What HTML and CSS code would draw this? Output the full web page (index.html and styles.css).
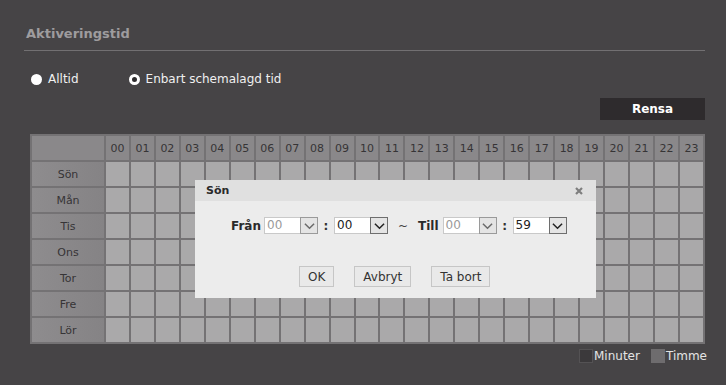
FILE: index.html
```html
<!DOCTYPE html>
<html lang="sv">
<head>
<meta charset="utf-8">
<title>Aktiveringstid</title>
<link rel="stylesheet" href="styles.css">
</head>
<body>
<div class="panel">
  <div class="title">Aktiveringstid</div>
  <div class="radios">
    <label class="radio"><span class="dot dot-full"></span>Alltid</label>
    <label class="radio radio-second"><span class="dot dot-ring"></span>Enbart schemalagd tid</label>
  </div>
  <div class="actions"><button class="clear">Rensa</button></div>
  <div class="grid-wrap">
    <table class="grid">
      <thead>
        <tr><th class="corner"></th><th>00</th><th>01</th><th>02</th><th>03</th><th>04</th><th>05</th><th>06</th><th>07</th><th>08</th><th>09</th><th>10</th><th>11</th><th>12</th><th>13</th><th>14</th><th>15</th><th>16</th><th>17</th><th>18</th><th>19</th><th>20</th><th>21</th><th>22</th><th>23</th></tr>
      </thead>
      <tbody id="rows"></tbody>
    </table>
    <div class="dialog">
      <div class="dlg-head"><span class="dlg-title">Sön</span><span class="dlg-close"><svg viewBox="0 0 8 8" width="8" height="8"><path d="M1 1 L7 7 M7 1 L1 7" fill="none" stroke="currentColor" stroke-width="2.2"/></svg></span></div>
      <div class="dlg-body">
        <div class="time-row">
          <span class="lbl">Från</span>
          <span class="sel sel-dim"><span class="sel-val">00</span><span class="sel-btn"><svg viewBox="0 0 12 8" width="11" height="8"><path d="M1 1.5 L6 6.5 L11 1.5" fill="none" stroke="currentColor" stroke-width="1.6"/></svg></span></span>
          <span class="colon">:</span>
          <span class="sel"><span class="sel-val">00</span><span class="sel-btn"><svg viewBox="0 0 12 8" width="11" height="8"><path d="M1 1.5 L6 6.5 L11 1.5" fill="none" stroke="currentColor" stroke-width="1.6"/></svg></span></span>
          <span class="tilde">~</span>
          <span class="lbl lbl-till">Till</span>
          <span class="sel sel-dim"><span class="sel-val">00</span><span class="sel-btn"><svg viewBox="0 0 12 8" width="11" height="8"><path d="M1 1.5 L6 6.5 L11 1.5" fill="none" stroke="currentColor" stroke-width="1.6"/></svg></span></span>
          <span class="colon">:</span>
          <span class="sel"><span class="sel-val">59</span><span class="sel-btn"><svg viewBox="0 0 12 8" width="11" height="8"><path d="M1 1.5 L6 6.5 L11 1.5" fill="none" stroke="currentColor" stroke-width="1.6"/></svg></span></span>
        </div>
        <div class="btn-row">
          <button class="dbtn">OK</button>
          <button class="dbtn">Avbryt</button>
          <button class="dbtn">Ta bort</button>
        </div>
      </div>
    </div>
  </div>
  <div class="legend">
    <span class="sw sw-min"></span><span class="lg-text">Minuter</span>
    <span class="sw sw-hour"></span><span class="lg-text">Timme</span>
  </div>
</div>
<script>
  var days = ["Sön","Mån","Tis","Ons","Tor","Fre","Lör"];
  var tb = document.getElementById("rows");
  days.forEach(function(d){
    var tr = document.createElement("tr");
    var th = document.createElement("th");
    th.className = "day";
    th.textContent = d;
    tr.appendChild(th);
    for (var i = 0; i < 24; i++) {
      var td = document.createElement("td");
      tr.appendChild(td);
    }
    tb.appendChild(tr);
  });
</script>
</body>
</html>
```
FILE: styles.css
```css
html, body {
  margin: 0;
  padding: 0;
  background: #464446;
  font-family: "DejaVu Sans", Verdana, sans-serif;
}
.panel {
  width: 681px;
  margin-left: 24px;
  padding-top: 24px;
}
.title {
  color: #9e9c9e;
  font-size: 13px;
  font-weight: bold;
  line-height: 18px;
  padding-top: 1px;
  padding-left: 2px;
  padding-bottom: 7px;
  border-bottom: 1px solid #727072;
}
.radios {
  display: flex;
  align-items: center;
  height: 16px;
  margin-top: 20px;
  padding-left: 7px;
}
.radio {
  display: flex;
  align-items: center;
  color: #f0f0f0;
  font-size: 12px;
}
.radio-second {
  margin-left: 50px;
}
.dot {
  width: 11px;
  height: 11px;
  border-radius: 50%;
  margin-right: 6px;
  box-sizing: border-box;
}
.dot-full {
  background: #ffffff;
}
.dot-ring {
  border: 3px solid #ffffff;
  background: #2e2c2e;
  margin-right: 6px;
}
.actions {
  display: flex;
  justify-content: flex-end;
  margin-top: 11px;
}
.clear {
  width: 105px;
  height: 22px;
  border: 0;
  background: #2e2b2d;
  color: #ffffff;
  font-family: "DejaVu Sans", Verdana, sans-serif;
  font-weight: bold;
  font-size: 12px;
  padding: 0;
}
.grid-wrap {
  position: relative;
  margin-top: 14px;
  margin-left: 6px;
  width: 675px;
}
.grid {
  width: 675px;
  table-layout: fixed;
  border-collapse: separate;
  border-spacing: 2px;
  background: #747274;
}
.grid th, .grid td {
  height: 24px;
  padding: 0;
  font-size: 11px;
  font-weight: normal;
  color: #363436;
  text-align: center;
}
.grid thead th {
  background: #8a888a;
}
.grid .corner {
  width: 72px;
  background: #8a888a;
}
.grid .day {
  background: linear-gradient(to right, #8e8c8e, #858385);
}
.grid td {
  background: #aaa9aa;
}
.dialog {
  position: absolute;
  left: 165px;
  top: 46px;
  width: 401px;
  height: 118px;
  background: #ececec;
}
.dlg-head {
  height: 21px;
  background: #e0e0e0;
  display: flex;
  align-items: center;
  justify-content: space-between;
  padding: 0 13px 0 11px;
}
.dlg-title {
  font-size: 11px;
  font-weight: bold;
  color: #2a2a2a;
}
.dlg-close {
  display: flex;
  color: #7e7e7e;
}
.dlg-body {
  padding-top: 16px;
  padding-left: 36px;
}
.time-row {
  display: flex;
  align-items: center;
  height: 17px;
  font-size: 12px;
  color: #333;
}
.lbl {
  font-weight: bold;
  color: #2a2a2a;
  margin-right: 3px;
}
.lbl-till {
  margin-right: 4px;
}
.sel {
  display: flex;
  width: 54px;
  height: 17px;
  box-sizing: border-box;
  background: #ffffff;
  border: 1px solid #c9c9c9;
}
.sel-val {
  flex: 1;
  font-size: 12px;
  line-height: 15px;
  padding-left: 2px;
  color: #222;
}
.sel-btn {
  width: 18px;
  height: 17px;
  margin: -1px -1px -1px 0;
  box-sizing: border-box;
  border: 1px solid #6e6e6e;
  background: #e4e4e4;
  display: flex;
  align-items: center;
  justify-content: center;
  color: #222;
}
.sel-dim .sel-val {
  color: #9a9a9a;
}
.sel-dim .sel-btn {
  border-color: #9a9a9a;
  color: #6a6a6a;
}
.colon {
  width: 16px;
  text-align: center;
  font-weight: bold;
  color: #333;
}
.tilde {
  width: 30px;
  text-align: center;
  color: #444;
  font-size: 12px;
}
.btn-row {
  display: flex;
  gap: 20px;
  margin-top: 32px;
  padding-left: 68px;
}
.dbtn {
  height: 21px;
  padding: 0 8px;
  background: #e9e9e9;
  border: 1px solid #c6c6c6;
  font-family: "DejaVu Sans", Verdana, sans-serif;
  font-size: 12px;
  color: #333;
}
.legend {
  display: flex;
  align-items: center;
  justify-content: flex-end;
  margin-top: 5px;
  margin-right: -2px;
  height: 14px;
  font-size: 12px;
  color: #e4e4e4;
}
.sw {
  width: 14px;
  height: 14px;
  box-sizing: border-box;
  margin-right: 1px;
}
.sw-min {
  background: #3b393b;
  border: 1px solid #545254;
}
.sw-hour {
  background: #6e6c6e;
  margin-left: 11px;
}
```
